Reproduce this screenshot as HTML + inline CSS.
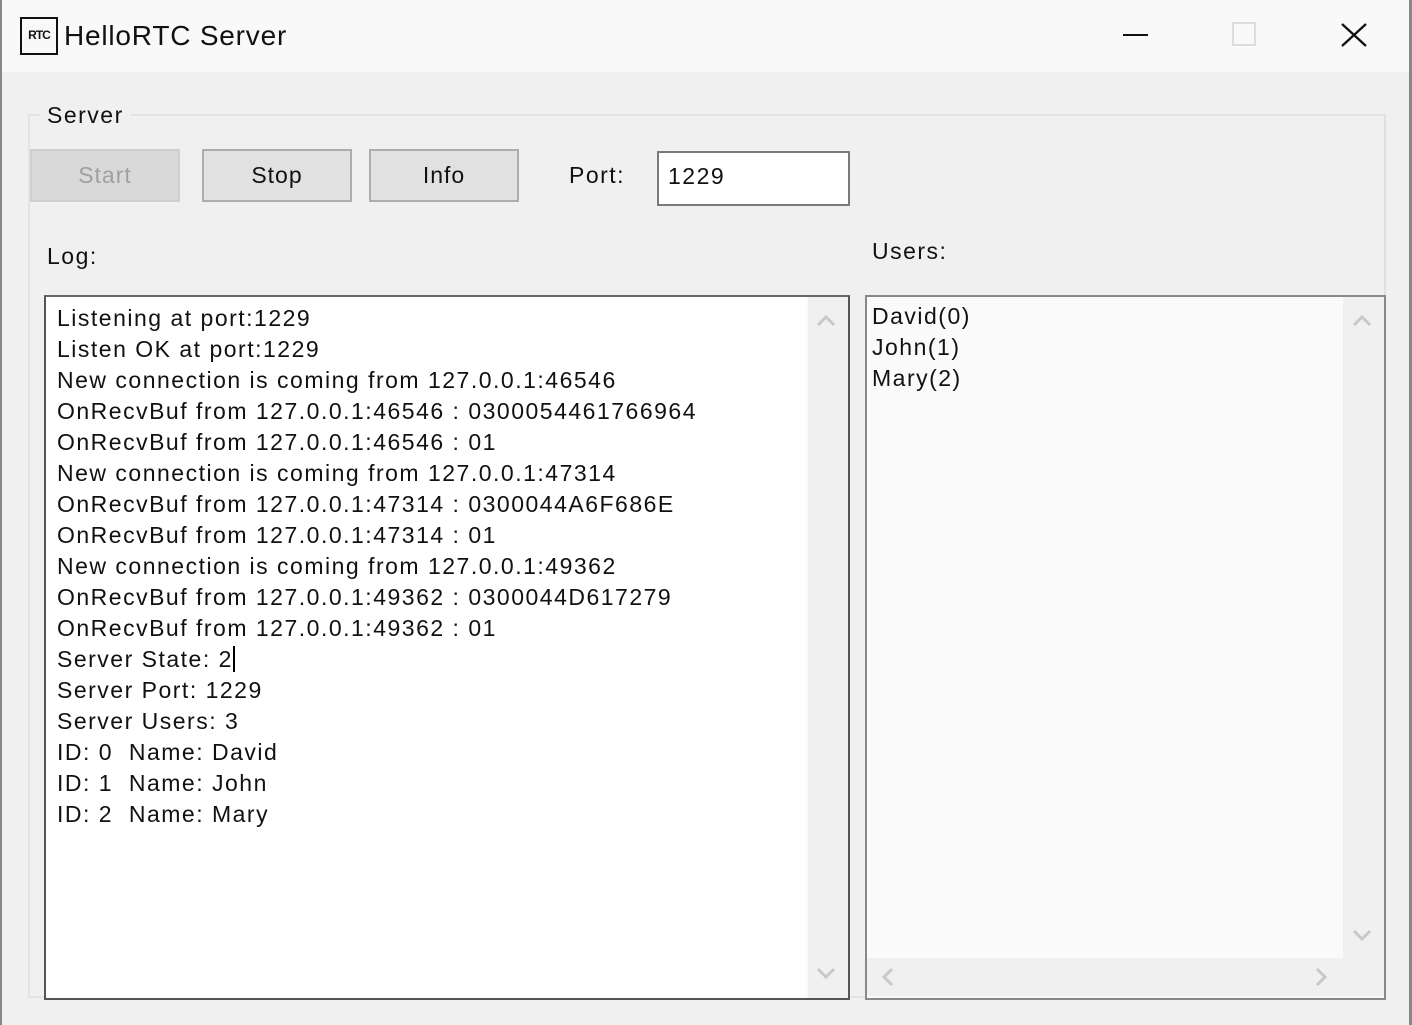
<!DOCTYPE html>
<html><head><meta charset="utf-8"><style>
*{margin:0;padding:0;box-sizing:border-box}
body{width:1412px;height:1025px;background:#f0f0f0;font-family:"Liberation Sans",sans-serif;color:#111;position:relative;overflow:hidden}
.a{position:absolute}
.t{font-size:23px;white-space:pre;line-height:31px;letter-spacing:1.5px}
.btn{position:absolute;top:149px;height:53px;width:150px;border:2px solid #adadad;background:#e1e1e1;font-size:23px;text-align:center;line-height:49px;letter-spacing:1px}
</style></head><body>
<div class="a" style="left:0;top:0;width:1412px;height:72px;background:#f9f9f9"></div>
<div class="a" style="left:0;top:0;width:2px;height:1025px;background:#888"></div>
<div class="a" style="left:1409px;top:0;width:3px;height:1025px;background:#888"></div>
<div class="a" style="left:20px;top:17px;width:38px;height:38px;border:2px solid #111;font-size:12px;font-weight:bold;text-align:center;line-height:33px;letter-spacing:-1px">RTC</div>
<div class="a" style="left:64px;top:17px;font-size:28px;line-height:38px;letter-spacing:0.8px">HelloRTC Server</div>
<div class="a" style="left:1123px;top:34px;width:25px;height:2px;background:#111"></div>
<div class="a" style="left:1232px;top:22px;width:24px;height:24px;border:2px solid #ddd"></div>
<svg class="a" style="left:1340px;top:22px" width="28" height="26"><path d="M2 2L26 24M26 2L2 24" stroke="#111" stroke-width="2.3"/></svg>

<div class="a" style="left:28px;top:114px;width:1358px;height:884px;border:2px solid #e3e3e3;border-right-color:#e0e0e0"></div>
<div class="a t" style="left:40px;top:100px;background:#f0f0f0;padding:0 7px">Server</div>

<div class="btn" style="left:30px;background:#d9d9d9;border-color:#cfcfcf;color:#a0a0a0">Start</div>
<div class="btn" style="left:202px">Stop</div>
<div class="btn" style="left:369px">Info</div>
<div class="a t" style="left:569px;top:160px">Port:</div>
<div class="a t" style="left:657px;top:151px;width:193px;height:55px;background:#fff;border:2px solid #7a7a7a;padding:8px 0 0 9px;line-height:31px">1229</div>

<div class="a t" style="left:47px;top:241px">Log:</div>
<div class="a t" style="left:872px;top:236px">Users:</div>

<div class="a" style="left:44px;top:295px;width:806px;height:705px;background:#fff;border:2px solid #555;border-top-color:#666"></div>
<div class="a" style="left:806px;top:297px;width:42px;height:701px;background:#f0f0f0;border-left:2px solid #fafafa"></div>
<svg class="a" style="left:815px;top:312px" width="22" height="16"><path d="M3 13L11 5L19 13" stroke="#c8c8c8" stroke-width="3" fill="none"/></svg>
<svg class="a" style="left:815px;top:966px" width="22" height="16"><path d="M3 3L11 11L19 3" stroke="#c8c8c8" stroke-width="3" fill="none"/></svg>
<div class="a t" style="left:57px;top:303px">Listening at port:1229
Listen OK at port:1229
New connection is coming from 127.0.0.1:46546
OnRecvBuf from 127.0.0.1:46546 : 0300054461766964
OnRecvBuf from 127.0.0.1:46546 : 01
New connection is coming from 127.0.0.1:47314
OnRecvBuf from 127.0.0.1:47314 : 0300044A6F686E
OnRecvBuf from 127.0.0.1:47314 : 01
New connection is coming from 127.0.0.1:49362
OnRecvBuf from 127.0.0.1:49362 : 0300044D617279
OnRecvBuf from 127.0.0.1:49362 : 01
Server State: 2<span style="border-left:2px solid #000;margin-left:0"></span>
Server Port: 1229
Server Users: 3
ID: 0  Name: David
ID: 1  Name: John
ID: 2  Name: Mary</div>

<div class="a" style="left:865px;top:295px;width:521px;height:705px;background:#fafafa;border:2px solid #888"></div>
<div class="a" style="left:1343px;top:297px;width:41px;height:661px;background:#f0f0f0"></div>
<div class="a" style="left:867px;top:958px;width:517px;height:38px;background:#f0f0f0"></div>
<svg class="a" style="left:1351px;top:312px" width="22" height="16"><path d="M3 13L11 5L19 13" stroke="#c8c8c8" stroke-width="3" fill="none"/></svg>
<svg class="a" style="left:1351px;top:928px" width="22" height="16"><path d="M3 3L11 11L19 3" stroke="#c8c8c8" stroke-width="3" fill="none"/></svg>
<svg class="a" style="left:879px;top:966px" width="16" height="22"><path d="M13 3L5 11L13 19" stroke="#c8c8c8" stroke-width="3" fill="none"/></svg>
<svg class="a" style="left:1314px;top:966px" width="16" height="22"><path d="M3 3L11 11L3 19" stroke="#c8c8c8" stroke-width="3" fill="none"/></svg>
<div class="a t" style="left:872px;top:301px">David(0)
John(1)
Mary(2)</div>
</body></html>
